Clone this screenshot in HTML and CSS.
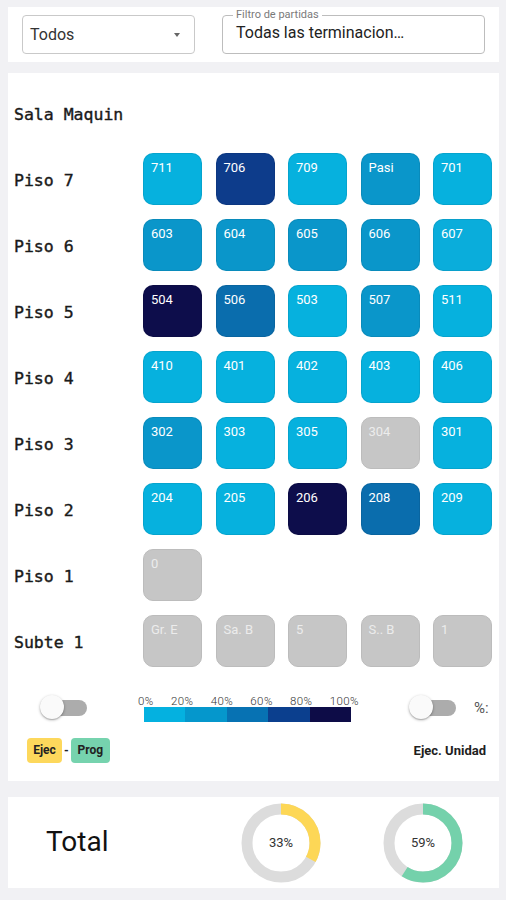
FILE: index.html
```html
<!DOCTYPE html>
<html lang="es">
<head>
<meta charset="utf-8">
<title>Avance por piso</title>
<link rel="stylesheet" href="styles.css">
</head>
<body>
<div class="filters card">
  <div class="select">
    <span class="select-text">Todos</span>
    <span class="caret"></span>
  </div>
  <div class="field">
    <span class="field-label">Filtro de partidas</span>
    <span class="field-text">Todas las terminacion…</span>
  </div>
</div>

<div class="board card">
  <div class="row"><div class="floor">Sala Maquin</div><div class="tiles"></div></div>
  <div class="row"><div class="floor">Piso 7</div>
    <div class="tiles">
      <div class="tile c1">711</div><div class="tile c4">706</div><div class="tile c1">709</div><div class="tile c2">Pasi</div><div class="tile c1">701</div>
    </div></div>
  <div class="row"><div class="floor">Piso 6</div>
    <div class="tiles">
      <div class="tile c2">603</div><div class="tile c2">604</div><div class="tile c2">605</div><div class="tile c2">606</div><div class="tile c1b">607</div>
    </div></div>
  <div class="row"><div class="floor">Piso 5</div>
    <div class="tiles">
      <div class="tile c5">504</div><div class="tile c3">506</div><div class="tile c1">503</div><div class="tile c2">507</div><div class="tile c1">511</div>
    </div></div>
  <div class="row"><div class="floor">Piso 4</div>
    <div class="tiles">
      <div class="tile c1">410</div><div class="tile c1">401</div><div class="tile c1">402</div><div class="tile c1">403</div><div class="tile c1">406</div>
    </div></div>
  <div class="row"><div class="floor">Piso 3</div>
    <div class="tiles">
      <div class="tile c2">302</div><div class="tile c1">303</div><div class="tile c1">305</div><div class="tile off">304</div><div class="tile c1">301</div>
    </div></div>
  <div class="row"><div class="floor">Piso 2</div>
    <div class="tiles">
      <div class="tile c1">204</div><div class="tile c1">205</div><div class="tile c5">206</div><div class="tile c3">208</div><div class="tile c1">209</div>
    </div></div>
  <div class="row"><div class="floor">Piso 1</div>
    <div class="tiles">
      <div class="tile off">0</div>
    </div></div>
  <div class="row"><div class="floor">Subte 1</div>
    <div class="tiles">
      <div class="tile off">Gr. E</div><div class="tile off">Sa. B</div><div class="tile off">5</div><div class="tile off">S.. B</div><div class="tile off">1</div>
    </div></div>

  <div class="legend-row">
    <div class="switch switch-left"><span class="track"></span><span class="thumb"></span></div>
    <div class="scale">
      <div class="scale-labels"><span>0%</span><span>20%</span><span>40%</span><span>60%</span><span>80%</span><span>100%</span></div>
      <div class="scale-bar"><span class="s1"></span><span class="s2"></span><span class="s3"></span><span class="s4"></span><span class="s5"></span></div>
    </div>
    <div class="switch switch-right"><span class="track"></span><span class="thumb"></span></div>
    <div class="pct">%:</div>
  </div>
  <div class="mode-row">
    <div class="badges"><span class="badge ejec">Ejec</span><span class="dash">-</span><span class="badge prog">Prog</span></div>
    <div class="unit">Ejec. Unidad</div>
  </div>
</div>

<div class="totals card">
  <div class="total-label">Total</div>
  <div class="donut">
    <svg width="80" height="80" viewBox="0 0 80 80">
      <circle cx="40" cy="40" r="34" fill="none" stroke="#dcdcdc" stroke-width="11"/>
      <circle cx="40" cy="40" r="34" fill="none" stroke="#fdd756" stroke-width="11" stroke-dasharray="70.5 213.6" transform="rotate(-90 40 40)"/>
    </svg>
    <span class="donut-text">33%</span>
  </div>
  <div class="donut donut-2">
    <svg width="80" height="80" viewBox="0 0 80 80">
      <circle cx="40" cy="40" r="34" fill="none" stroke="#dcdcdc" stroke-width="11"/>
      <circle cx="40" cy="40" r="34" fill="none" stroke="#74d1ab" stroke-width="11" stroke-dasharray="126 213.6" transform="rotate(-90 40 40)"/>
    </svg>
    <span class="donut-text">59%</span>
  </div>
</div>
</body>
</html>
```
FILE: styles.css
```css
* { box-sizing: border-box; }
html, body { margin: 0; padding: 0; }
body {
  width: 506px;
  height: 900px;
  background: #f1f1f4;
  font-family: Roboto, "Liberation Sans", sans-serif;
  padding-top: 7px;
  overflow: hidden;
}
.card {
  background: #ffffff;
  margin: 0 7px 0 8px;
}

/* filters */
.filters {
  display: flex;
  height: 55px;
  padding: 8px 14px 8px 14px;
  gap: 27px;
}
.select {
  width: 173px;
  height: 39px;
  border: 1px solid #c9c9c9;
  border-radius: 4px;
  display: flex;
  align-items: center;
  padding: 0 14px 0 7px;
  justify-content: space-between;
}
.select-text { font-size: 16px; color: #333; }
.caret {
  width: 0; height: 0;
  border-left: 3.5px solid transparent;
  border-right: 3.5px solid transparent;
  border-top: 4px solid #666;
}
.field {
  flex: 1;
  height: 39px;
  border: 1px solid #bdbdbd;
  border-radius: 4px;
  position: relative;
  display: flex;
  align-items: center;
  padding: 0 13px 4px 13px;
}
.field-label {
  position: absolute;
  left: 10px;
  top: -8px;
  background: #fff;
  padding: 0 3px;
  font-size: 11px;
  line-height: 13px;
  color: #7a7a7a;
}
.field-text { font-size: 16px; color: #222; white-space: nowrap; }

/* board */
.board {
  margin-top: 11px;
  padding: 14px 7px 18px 6px;
}
.row {
  display: flex;
  align-items: center;
  height: 52px;
  margin-bottom: 14px;
}
.row:nth-child(9) { margin-bottom: 0; }
.floor {
  width: 129px;
  font-family: "DejaVu Sans Mono", "Liberation Mono", monospace;
  font-size: 16.5px;
  color: #1a1a1a;
  -webkit-text-stroke: 0.4px #1a1a1a;
  padding-top: 3px;
}
.tiles {
  display: flex;
  gap: 13.5px;
}
.tile {
  width: 59px;
  height: 52px;
  border-radius: 10px;
  border: 1px solid rgba(0, 0, 0, 0.07);
  color: #fff;
  font-size: 13px;
  line-height: 15px;
  padding: 6px 0 0 7px;
  white-space: nowrap;
}
.c1 { background: #06b1de; }
.c1b { background: #0aaddb; }
.c2 { background: #0a96ca; }
.c3 { background: #0a6dad; }
.c4 { background: #0d3c8b; }
.c5 { background: #0d0d4b; }
.off { background: #c6c6c6; border-color: #bcbcbc; color: #ececec; }

/* legend */
.legend-row {
  display: flex;
  align-items: flex-start;
  margin-top: 28px;
}
.switch {
  position: relative;
  width: 48px;
  height: 26px;
}
.switch-left { margin-left: 26px; }
.switch-right { margin-left: 50px; }
.track {
  position: absolute;
  left: 10px;
  top: 5px;
  width: 37px;
  height: 16px;
  border-radius: 8px;
  background: #acacac;
}
.thumb {
  position: absolute;
  left: 0;
  top: 0;
  width: 24px;
  height: 24px;
  border-radius: 50%;
  background: #fafafa;
  box-shadow: 0 1px 3px rgba(0,0,0,0.3), 0 1px 1px rgba(0,0,0,0.14);
}
.scale {
  margin-left: 50px;
  width: 221px;
}
.scale-labels {
  display: flex;
  justify-content: space-between;
  font-family: Roboto, sans-serif;
  font-weight: 300;
  font-size: 11.5px;
  line-height: 12px;
  letter-spacing: 0.4px;
  color: #333;
}
.scale-bar {
  display: flex;
  height: 15px;
  margin: 0 8px 0 6px;
}
.scale-bar span { flex: 1; }
.s1 { background: #04b1e0; }
.s2 { background: #0597cc; }
.s3 { background: #0772b3; }
.s4 { background: #0b3f8e; }
.s5 { background: #0d0c47; }
.pct {
  margin-left: 17px;
  font-size: 15px;
  line-height: 26px;
  color: #555;
}
.mode-row {
  display: flex;
  justify-content: space-between;
  align-items: center;
  margin-top: 16px;
  padding: 0 6px 0 13px;
}
.badges { display: flex; align-items: center; }
.badge {
  font-size: 12px;
  font-weight: 700;
  color: #222;
  height: 25px;
  line-height: 25px;
  text-align: center;
  border-radius: 4px;
}
.ejec { background: #fdd85c; width: 35px; }
.prog { background: #76d3ae; width: 39px; }
.dash { font-size: 12px; font-weight: 700; color: #222; margin: 0 2px; }
.unit { font-size: 13px; font-weight: 700; color: #1e1e1e; }

/* totals */
.totals {
  margin-top: 16px;
  height: 91px;
  display: flex;
  align-items: center;
  padding-left: 38px;
}
.total-label {
  width: 195px;
  font-size: 28px;
  color: #111;
  padding-bottom: 2px;
}
.donut {
  position: relative;
  width: 80px;
  height: 80px;
}
.donut svg { display: block; }
.donut-2 { margin-left: 62px; }
.donut-text {
  position: absolute;
  inset: 0;
  display: flex;
  align-items: center;
  justify-content: center;
  font-size: 13px;
  color: #333;
}
```
